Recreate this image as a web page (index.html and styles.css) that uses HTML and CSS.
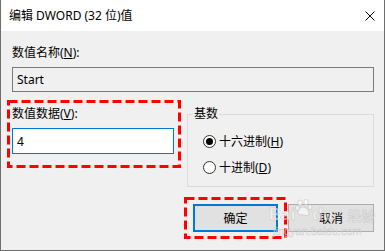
FILE: index.html
```html
<!DOCTYPE html>
<html lang="zh-CN">
<head>
<meta charset="utf-8">
<title>编辑 DWORD (32 位)值</title>
<link rel="stylesheet" href="styles.css">
</head>
<body>
<div class="window">
  <div class="titlebar">
    <span class="title">编辑 DWORD (32 位)值</span>
    <svg class="close" viewBox="0 0 10 10" width="10" height="10"><path d="M0.5 0.5L9.5 9.5M9.5 0.5L0.5 9.5" stroke="#000" stroke-width="1" fill="none"/></svg>
  </div>
  <div class="content">
    <div class="label">数值名称(<u>N</u>):</div>
    <div class="field readonly">Start</div>
    <div class="row">
      <div class="datacol">
        <div class="label">数值数据(<u>V</u>):</div>
        <div class="field active">4</div>
        <svg class="mark mark-data" viewBox="0 0 174 68" width="174" height="68"><rect x="1.5" y="1.5" width="171" height="65" fill="none" stroke="#ff0000" stroke-width="3" stroke-dasharray="9 4"/></svg>
      </div>
      <fieldset class="group">
        <legend>基数</legend>
        <div class="radio-row"><span class="radio checked"></span><span>十六进制(<u>H</u>)</span></div>
        <div class="radio-row"><span class="radio"></span><span>十进制(<u>D</u>)</span></div>
      </fieldset>
    </div>
    <div class="buttons">
      <div class="btn-wrap">
        <div class="btn primary">确定</div>
        <svg class="mark mark-ok" viewBox="0 0 103 42" width="103" height="42"><rect x="1.5" y="1.5" width="100" height="39" fill="none" stroke="#ff0000" stroke-width="3" stroke-dasharray="9 4"/></svg>
      </div>
      <div class="btn">取消</div>
    </div>
  </div>
  <div class="watermark">
    <div class="wm-top"><span>Bai</span><svg class="paw" viewBox="0 0 20 18" width="20" height="18"><g fill="rgba(255,255,255,0.6)" stroke="rgba(170,170,170,0.5)" stroke-width="0.8"><ellipse cx="5" cy="4" rx="2.2" ry="3"/><ellipse cx="11" cy="3" rx="2.2" ry="3"/><ellipse cx="2.5" cy="9" rx="2" ry="2.6"/><ellipse cx="15" cy="8" rx="2" ry="2.6"/><path d="M8 8c3 0 6 4 6 6.5S11 17 8.5 16 3 17 3 14 5 8 8 8z"/></g></svg><span>du</span><span class="wm-cn">经验</span></div>
    <div class="wm-url">jingyan.baidu.com</div>
  </div>
</div>
</body>
</html>
```
FILE: styles.css
```css
* { box-sizing: border-box; }
body {
  margin: 0;
  font-family: "Noto Sans", "Noto Sans CJK SC", sans-serif;
  font-size: 12px;
  color: #000;
}
.window {
  width: 385px;
  height: 251px;
  background: #f0f0f0;
  border: 1px solid #6e6e6e;
  border-top: 0;
  display: flex;
  flex-direction: column;
  position: relative;
}
.titlebar {
  height: 31px;
  background: #fff;
  display: flex;
  align-items: center;
  justify-content: space-between;
  padding: 0 9px 0 8px;
  flex: none;
}
.title { line-height: 16px; }
.close { display: block; }
.content { padding: 14px 10px 0 11px; }
.label { line-height: 16px; height: 16px; }
.field {
  height: 25px;
  margin-top: 6px;
  border: 1px solid #7a7a7a;
  padding-left: 4px;
  display: flex;
  align-items: center;
  background: #f0f0f0;
}
.field.active {
  height: 26px;
  border-color: #0078d7;
  background: #fff;
}
.row {
  display: flex;
  align-items: flex-start;
  gap: 13px;
  margin-top: 14px;
}
.datacol { width: 162px; position: relative; flex: none; }
.mark { position: absolute; display: block; pointer-events: none; }
.mark-data { left: -5px; top: -6px; }
.group {
  flex: 1;
  min-width: 0;
  margin: 0;
  border: 1px solid #dcdcdc;
  padding: 6px 5px 6px 5px;
}
.group legend { padding: 0 1px; line-height: 16px; }
.radio-row {
  height: 26px;
  display: flex;
  align-items: center;
  padding-left: 10px;
  gap: 3px;
}
.radio {
  width: 13px;
  height: 13px;
  border: 1px solid #333;
  border-radius: 50%;
  background: #fff;
  position: relative;
  flex: none;
}
.radio.checked::after {
  content: "";
  position: absolute;
  left: 2px;
  top: 2px;
  width: 7px;
  height: 7px;
  border-radius: 50%;
  background: #000;
}
.buttons {
  display: flex;
  justify-content: flex-end;
  gap: 10px;
  margin-top: 17px;
}
.btn-wrap { position: relative; }
.btn {
  width: 86px;
  height: 28px;
  background: #e1e1e1;
  border: 1px solid #adadad;
  display: flex;
  align-items: center;
  justify-content: center;
}
.btn.primary { width: 85px; border: 2px solid #0078d7; }
.mark-ok { left: -9px; top: -7px; }
.watermark {
  position: absolute;
  left: 268px;
  top: 197px;
  pointer-events: none;
  color: rgba(255, 255, 255, 0.55);
  -webkit-text-stroke: 0.5px rgba(160, 160, 160, 0.45);
}
.wm-top {
  display: flex;
  align-items: flex-end;
  font-family: "Liberation Sans", sans-serif;
  font-weight: bold;
  font-size: 17px;
  line-height: 20px;
  height: 28px;
}
.paw { margin: 0 -3px 8px 0; }
.wm-cn {
  font-family: "Noto Sans CJK SC", sans-serif;
  font-weight: normal;
  font-size: 14px;
  margin-left: 14px;
}
.wm-url {
  font-family: "Liberation Sans", sans-serif;
  font-size: 11px;
  line-height: 12px;
  margin-left: 4px;
}
```
